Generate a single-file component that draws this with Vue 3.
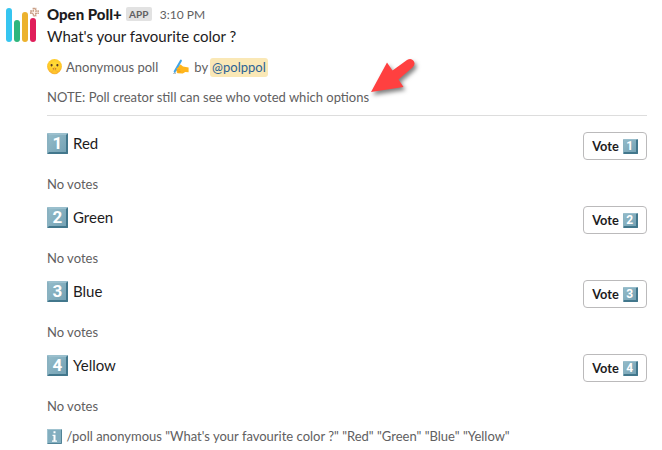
<script setup>
const options = ['Red', 'Green', 'Blue', 'Yellow']
</script>

<template>
  <main class="message">
    <svg class="avatar" viewBox="0 0 36 36">
      <rect x="1" y="1" width="6" height="34" rx="3" fill="#36c5f0" />
      <rect x="9" y="13" width="6" height="22" rx="3" fill="#2eb67d" />
      <rect x="17" y="5" width="6" height="30" rx="3" fill="#ecb22e" />
      <rect x="25" y="11" width="6" height="24" rx="3" fill="#e01e5a" />
      <path d="M28.300 1.500h2.400v2.500h2.500v2.400h-2.500v2.500h-2.400V6.400h-2.500V4h2.500z" fill="#fff4ec" stroke="#c9a088" stroke-width="1.400" stroke-dasharray="1.800 .4" />
    </svg>
    <div class="body">
      <header class="head">
        <b class="name">Open Poll+</b>
        <span class="app">APP</span>
        <time class="time">3:10 PM</time>
      </header>
      <p class="question">What's your favourite color ?</p>
      <div class="context">
        <svg class="emoji" viewBox="0 0 16 16">
          <defs>
            <radialGradient id="face" cx=".5" cy=".4" r=".65">
              <stop offset="0" stop-color="#ffe03c" />
              <stop offset=".65" stop-color="#ffca28" />
              <stop offset="1" stop-color="#f3a034" />
            </radialGradient>
          </defs>
          <circle cx="7.500" cy="7.500" r="7.400" fill="url(#face)" />
          <rect x="3.600" y="5" width="2" height="2.400" rx=".8" fill="#5b3b26" />
          <rect x="9.400" y="5" width="2" height="2.400" rx=".8" fill="#5b3b26" />
          <ellipse cx="7.500" cy="9.800" rx="1.900" ry=".9" fill="#a0602c" />
          <path d="M6.900 8.500q.6-.7 1.200 0v3l1.900.5q1 .9 0 2.500-2.200.9-4.600 0-1.100-1.300-.3-2.500l1.800-1z" fill="#ffc52b" stroke="#f0a535" stroke-width=".5" />
        </svg>
        <span class="anon">Anonymous poll</span>
        <svg class="emoji hand" viewBox="0 0 16 16">
          <path d="M.5 14.500q1-.8 2.300-.3" fill="none" stroke="#455a64" stroke-width=".7" />
          <path d="M3.200 8.600L7.600 5.600 10 7.500l5.600 1v4.700l-3.300-.1-2.500 1.300-5.300-.2q-1.300-.7-.7-1.600-1.300-.7-.4-1.900-1-.8-.2-2.200z" fill="#ffb51c" />
          <path d="M7.900 1.700L4.700 7.200 1.700 12.600" fill="none" stroke="#42a5e8" stroke-width="2.100" stroke-linecap="round" />
          <path d="M3.500 9.300l4-1.500.6 1.300-4 1.500z" fill="#ffb51c" />
          <path d="M4.100 11.200l3.100-.5M4.700 12.900l3-.5" fill="none" stroke="#e58a16" stroke-width=".5" />
        </svg>
        <span class="by">by</span>
        <span class="mention">@polppol</span>
      </div>
      <p class="note">NOTE: Poll creator still can see who voted which options</p>
      <hr class="divider" />
      <section v-for="(option, i) in options" :key="option" class="option">
        <div class="row">
          <div class="label"><span class="key">{{ i + 1 }}</span>{{ option }}</div>
          <button class="vote">Vote <span class="key small">{{ i + 1 }}</span></button>
        </div>
        <p class="votes">No votes</p>
      </section>
      <footer class="command">
        <svg class="info" viewBox="0 0 15 15">
          <rect width="15" height="15" rx=".7" fill="#528397" />
          <path d="M0 0h15l-1 1H1v13l-1 1z" fill="#a0c3d0" />
          <rect x="1" y="1" width="13" height="13" fill="#82aebf" />
          <path d="M6.500 2.200h2v2h-2zM5.500 5.700h3v5.700H10v1.400H5v-1.400h1.500V7h-1z" fill="#fff" />
        </svg>
        <span>/poll anonymous "What's your favourite color ?" "Red" "Green" "Blue" "Yellow"</span>
      </footer>
    </div>
    <svg class="arrow" viewBox="0 0 60 52">
      <path d="M5 38L21 8.500l5.500 8L41 6q4-2.500 6.500.8t-1 6.700L32.500 25.500l5 7.500z" fill="#ff4040" />
    </svg>
  </main>
</template>

<style>
body {
  margin: 0;
  background: #fff;
}
</style>

<style scoped>
.message {
  position: relative;
  box-sizing: border-box;
  width: 662px;
  height: 450px;
  overflow: hidden;
  display: flex;
  gap: 6px;
  padding: 3px 15px 0 5px;
  font-family: Lato, "Liberation Sans", sans-serif;
  font-size: 15px;
  line-height: 22px;
  color: #1d1c1d;
}
.avatar {
  width: 36px;
  height: 36px;
  flex: none;
  margin-top: 4px;
}
.body {
  flex: 1;
}
p {
  margin: 0;
}
.head {
  display: flex;
  align-items: center;
  height: 22px;
}
.name {
  font-weight: 900;
}
.app {
  margin-left: 4px;
  padding: 0 3px;
  height: 14px;
  border-radius: 2px;
  background: #e2e2e2;
  color: #616061;
  font-size: 10px;
  line-height: 14px;
  font-weight: 700;
  width: 20px;
  text-align: center;
}
.time {
  margin-left: 8px;
  font-size: 12px;
  color: #616061;
  padding-top: 2px;
}
.context {
  display: flex;
  align-items: center;
  height: 20px;
  margin-top: 10px;
  font-size: 13px;
  line-height: 20px;
  color: #616061;
}
.emoji {
  width: 16px;
  height: 16px;
  flex: none;
}
.anon {
  margin-left: 3px;
}
.hand {
  margin-left: 15px;
}
.by {
  margin-left: 5px;
}
.mention {
  margin-left: 2px;
  padding: 0 2px;
  height: 19px;
  line-height: 19px;
  border-radius: 3px;
  background: #fae8b6;
  color: #2c6395;
}
.note {
  margin-top: 10px;
  font-size: 13px;
  line-height: 20px;
  color: #616061;
}
.divider {
  height: 1px;
  margin: 8px 0 16px;
  border: 0;
  background: #dddddd;
}
.option {
  height: 74px;
}
.row {
  display: flex;
  justify-content: space-between;
  align-items: flex-start;
  height: 28px;
}
.label {
  display: flex;
  align-items: center;
  gap: 5px;
  height: 22px;
}
.key {
  box-sizing: border-box;
  display: inline-flex;
  align-items: center;
  justify-content: center;
  width: 21px;
  height: 21px;
  border: 2px solid;
  border-color: #9abfcd #42778c #42778c #8ab2c1;
  border-radius: 1px;
  background: linear-gradient(135deg, #92bac8, #75a2b4);
  color: #fff;
  font: 700 17px/17px Roboto, sans-serif;
}
.key.small {
  width: 15px;
  height: 15px;
  border-width: 1px 2px 2px 1px;
  font-size: 12px;
  line-height: 12px;
}
.vote {
  box-sizing: border-box;
  display: flex;
  align-items: center;
  justify-content: center;
  gap: 4px;
  width: 64px;
  height: 28px;
  padding: 0;
  border: 1px solid #bbbabb;
  border-radius: 4px;
  background: #fff;
  color: #1d1c1d;
  font: 700 12.800px/20px Lato, sans-serif;
}
.votes {
  margin-top: 14px;
  font-size: 13px;
  line-height: 20px;
  color: #616061;
}
.command {
  display: flex;
  align-items: center;
  gap: 4.500px;
  height: 20px;
  margin-top: -2px;
  font-size: 13px;
  line-height: 20px;
  color: #616061;
}
.info {
  width: 15px;
  height: 15px;
  flex: none;
}
.arrow {
  position: absolute;
  left: 366px;
  top: 54px;
  width: 60px;
  height: 52px;
  filter: drop-shadow(2px 3px 2px rgba(0, 0, 0, 0.5));
}
</style>
